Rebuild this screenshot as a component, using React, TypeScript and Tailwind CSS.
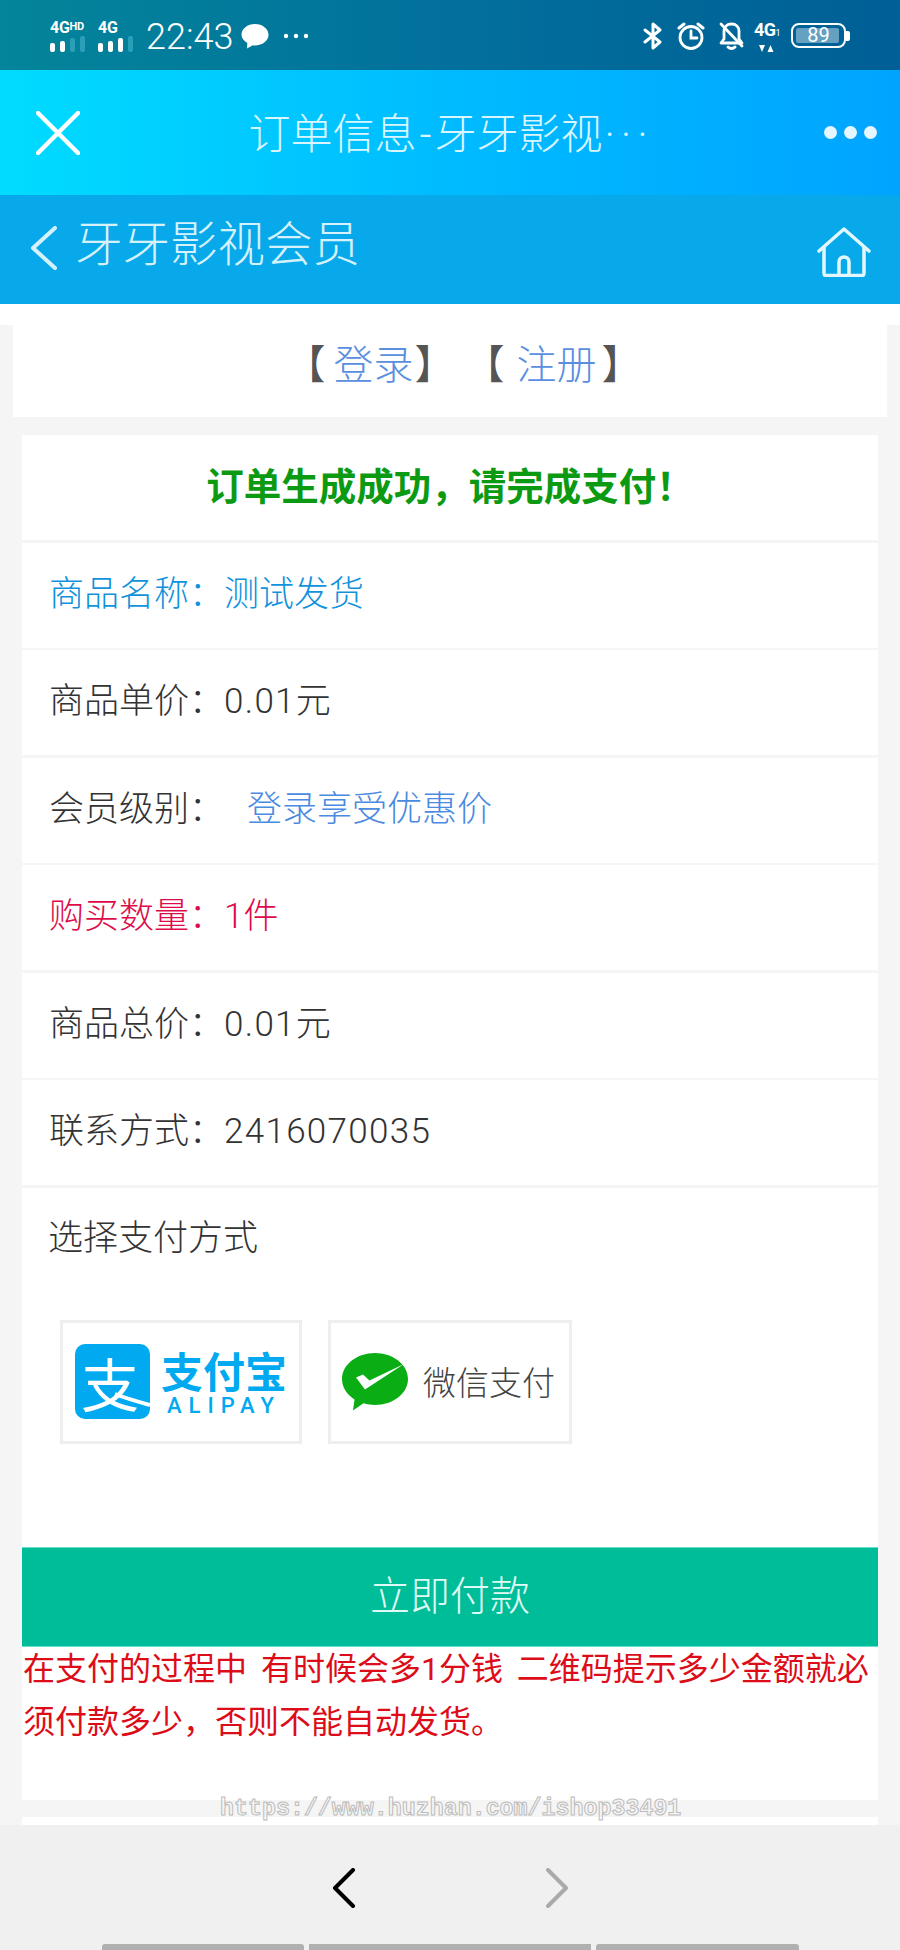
const CJK = "font-['Roboto','Noto_Sans_CJK_SC',sans-serif]";

const ROWS = [
  { label: "商品名称：", value: "测试发货", color: "text-[#1092dc]", spaced: false },
  { label: "商品单价：", value: "0.01元", color: "text-[#333333]", spaced: true },
  { label: "会员级别：", value: "", color: "text-[#333333]", link: "登录享受优惠价", spaced: false },
  { label: "购买数量：", value: "1件", color: "text-[#dc0c4a]", spaced: false },
  { label: "商品总价：", value: "0.01元", color: "text-[#333333]", spaced: true },
  { label: "联系方式：", value: "2416070035", color: "text-[#333333]", spaced: true },
];

const BAR_HEIGHTS = ["h-[9px]", "h-[11px]", "h-[14px]", "h-[16px]"];

function Signal({ label, sup, lit, width }: { label: string; sup?: string; lit: number; width: string }) {
  return (
    <div className={`flex flex-col ${width}`}>
      <span className="whitespace-nowrap font-['Roboto',sans-serif] text-[16px] font-bold leading-[15px] tracking-[-0.3px] text-white">
        {label}
        {sup && <span className="align-[3px] text-[11px]">{sup}</span>}
      </span>
      <div className="mt-[1px] flex h-[16px] items-end gap-[5px]">
        {BAR_HEIGHTS.map((h, i) => (
          <span key={h} className={`${h} w-[5px] rounded-[2px] ${i < lit ? "bg-white" : "bg-[#2aa0b8]"}`} />
        ))}
      </div>
    </div>
  );
}

function StatusBar() {
  return (
    <div className="flex h-[70px] items-center bg-gradient-to-r from-[#04859a] via-[#02709c] to-[#005f96] pl-[50px] pr-[50px] pt-[1px] text-white">
      <Signal label="4G" sup="HD" lit={2} width="w-[48px]" />
      <Signal label="4G" lit={3} width="w-[48px]" />
      <span className="w-[95px] pt-[2px] font-['Roboto',sans-serif] text-[36px] font-light leading-none">22:43</span>
      <svg width="28" height="26" viewBox="0 0 28 26" className="mr-[14px]">
        <path d="M14 1c7.5 0 13.5 4.8 13.5 10.8S21.500 22.500 14 22.500c-.8 0-1.500 0-2.200-.2L6 25.500l.3-5.500C2.800 18 .5 15.100.5 11.800.5 5.800 6.500 1 14 1z" fill="#fff" />
      </svg>
      <svg width="26" height="6" viewBox="0 0 26 6">
        <circle cx="3" cy="3" r="2.200" fill="#fff" />
        <circle cx="13" cy="3" r="2.200" fill="#fff" />
        <circle cx="23" cy="3" r="2.200" fill="#fff" />
      </svg>
      <div className="ml-auto flex items-center">
        <svg width="20" height="28" viewBox="0 0 20 28" fill="none" stroke="#fff" strokeWidth="3" strokeLinejoin="round" strokeLinecap="round">
          <path d="M2 8l15 12-7 6V2l7 6L2 20" />
        </svg>
        <svg width="28" height="28" viewBox="0 0 28 28" fill="none" stroke="#fff" strokeWidth="2.800" strokeLinecap="round" className="ml-[14px]">
          <circle cx="14" cy="15.500" r="11" />
          <path d="M14 9v7h6" />
          <path d="M2 6l5-4M26 6l-5-4" strokeWidth="3" />
        </svg>
        <svg width="27" height="28" viewBox="0 0 27 28" fill="none" stroke="#fff" strokeWidth="2.800" strokeLinecap="round" strokeLinejoin="round" className="ml-[13px]">
          <path d="M6 9c0-4 3-7 7.500-7S21 5 21 9v8l3 4H3l3-4z" />
          <path d="M10 25c2 2 5 2 7 0" strokeWidth="3" />
          <path d="M3 2l21 22" />
        </svg>
        <div className="ml-[9px] flex h-[27px] w-[23px] flex-col items-start">
          <span className="font-['Roboto',sans-serif] text-[18px] font-bold leading-[15px] tracking-[-0.5px]">
            4G<span className="text-[9px] font-normal">1</span>
          </span>
          <svg width="15" height="7" viewBox="0 0 15 7" className="ml-[5px] mt-[4px] shrink-0">
            <path d="M0 0h6L3 7zM8.500 7h6l-3-7z" fill="#fff" />
          </svg>
        </div>
        <div className="ml-[14px] flex items-center">
          <div className="relative flex h-[25px] w-[55px] items-center rounded-[8px] border-2 border-white p-[3px]">
            <div className="h-full w-[43px] rounded-[2px] bg-white/40" />
            <span className="absolute inset-0 text-center font-['Roboto',sans-serif] text-[20px] leading-[21px]">89</span>
          </div>
          <span className="h-[10px] w-[4px] rounded-r-[2px] bg-white" />
        </div>
      </div>
    </div>
  );
}

function TitleBar() {
  return (
    <div className="flex h-[125px] items-center bg-gradient-to-r from-[#00dcff] via-[#00bbff] to-[#00a4ff] pl-[36px] pr-[23px]">
      <svg width="44" height="44" viewBox="0 0 44 44" fill="none" stroke="#fff" strokeWidth="4.500" strokeLinecap="round">
        <path d="M2 2l40 40M42 2L2 42" />
      </svg>
      <div className={`flex-1 whitespace-nowrap pr-[2px] pt-[4px] text-center text-[42px] font-light leading-none text-[#d9f6ff] ${CJK}`}>
        订单信息<span className="mx-[3px]">-</span>牙牙影视<span className="ml-[2px] tracking-[6px]">···</span>
      </div>
      <div className="flex gap-[7px]">
        <span className="h-[13px] w-[13px] rounded-full bg-white/90" />
        <span className="h-[13px] w-[13px] rounded-full bg-white/90" />
        <span className="h-[13px] w-[13px] rounded-full bg-white/90" />
      </div>
    </div>
  );
}

function NavBar() {
  return (
    <div className="flex h-[109px] items-center bg-[#08a9ea] pl-[30px] pr-[29px]">
      <svg width="28" height="44" viewBox="0 0 28 44" fill="none" stroke="#d5f2fc" strokeWidth="4" strokeLinecap="round" strokeLinejoin="round" className="mb-[3px]">
        <path d="M25 2L3 22l22 20" />
      </svg>
      <span className={`mb-[7px] ml-[17px] text-[47.500px] font-light leading-none text-[#d5f2fc] ${CJK}`}>牙牙影视会员</span>
      <svg width="54" height="50" viewBox="0 0 54 50" fill="none" stroke="#e2f7fd" strokeWidth="3.500" strokeLinejoin="round" strokeLinecap="round" className="ml-auto mt-[5px]">
        <path d="M2 24L27 2l25 22" />
        <path d="M7 20v26c0 1.500.8 2.500 2 2.500h36c1.200 0 2-1 2-2.500V20" />
        <path d="M22 48V35c0-3 2.200-5 5-5s5 2 5 5v13" />
      </svg>
    </div>
  );
}

function Alipay() {
  return (
    <div className="flex h-[124px] w-[242px] items-center border-[3px] border-[#eeeeee] bg-white pl-[12px]">
      <div className="relative flex h-[75px] w-[75px] shrink-0 items-center justify-center rounded-[10px] bg-[#00a9f0]">
        <span className="mr-[5px] font-['Noto_Sans_CJK_SC',sans-serif] text-[58px] leading-[70px] text-white">支</span>
        {/* tail of the logo mark running out to the right edge */}
        <svg width="75" height="75" viewBox="0 0 75 75" className="absolute inset-0" fill="none" stroke="#fff" strokeWidth="4">
          <path d="M40 50c10 4 24 8 35 11" />
        </svg>
      </div>
      <div className="ml-[11px] flex flex-col items-start">
        <span className="font-['Noto_Sans_CJK_SC',sans-serif] text-[42px] font-bold leading-[44px] text-[#00a9f0]">支付宝</span>
        <span className="ml-[6px] mt-[4px] font-['Roboto',sans-serif] text-[22px] font-medium leading-[20px] tracking-[7px] text-[#00a9f0]">ALIPAY</span>
      </div>
    </div>
  );
}

function Wechat() {
  return (
    <div className="flex h-[124px] w-[244px] items-center border-[3px] border-[#eeeeee] bg-white pl-[11px]">
      <svg width="66" height="58" viewBox="0 0 66 58">
        <path d="M33 0c18 0 33 11.500 33 26S51 52 33 52c-4 0-8-.6-11.500-1.700L11 57.500l1.500-11C4.800 41.500 0 34.300 0 26 0 11.500 15 0 33 0z" fill="#0aae14" />
        <path d="M14 24.500l7-3 6.500 6L62 11 23 36.500z" fill="#fff" />
      </svg>
      <span className={`ml-[15px] whitespace-nowrap pt-[4px] text-[33px] font-light leading-none text-[#444444] ${CJK}`}>微信支付</span>
    </div>
  );
}

function OrderCard() {
  return (
    <div className="mx-[22px] mt-[18px] flex flex-col gap-[2.5px]">
      <div className={`flex h-[105px] items-center justify-center bg-white text-[37.500px] font-bold text-[#0b9a12] ${CJK}`}>
        订单生成成功，请完成支付！
      </div>
      {ROWS.map((row) => (
        <div key={row.label} className={`flex h-[105px] items-center whitespace-pre bg-white pl-[27px] text-[35px] font-light ${row.color} ${CJK}`}>
          {row.label}
          <span className={row.spaced ? "tracking-[1.300px]" : ""}>{row.value}</span>
          {row.link && <span className="ml-[23px] text-[#4a8ae0]">{row.link}</span>}
        </div>
      ))}
      <div className="bg-white">
        <div className={`flex h-[99px] items-center pt-[4px] pl-[26px] text-[35px] font-light text-[#333333] ${CJK}`}>选择支付方式</div>
        <div className="mt-[33px] flex gap-[26px] pl-[38px]">
          <Alipay />
          <Wechat />
        </div>
        <button type="button" className={`mt-[103px] block h-[100px] w-full border-y border-[#66e0cc] bg-[#00bd9a] pt-[1px] text-[40px] font-light text-[#e0fbf5] ${CJK}`}>
          立即付款
        </button>
        <p className={`relative -mt-[4px] h-[157px] pl-[1px] text-[32px] leading-[53px] text-[#dc0d18] [word-spacing:6px] ${CJK}`}>
          在支付的过程中 有时候会多1分钱 二维码提示多少金额就必须付款多少，否则不能自动发货。
        </p>
      </div>
      <div className="mt-[14.500px] h-[40px] bg-white" />
    </div>
  );
}

function BottomBar() {
  return (
    <div className="relative z-10 flex h-[125px] flex-col items-center bg-[#f0f0f0]">
      <div className="mt-[43px] flex gap-[189px]">
        <svg width="24" height="40" viewBox="0 0 24 40" fill="none" stroke="#000" strokeWidth="4" strokeLinecap="round" strokeLinejoin="round">
          <path d="M21 2L3 20l18 18" />
        </svg>
        <svg width="24" height="40" viewBox="0 0 24 40" fill="none" stroke="#aaaaaa" strokeWidth="4" strokeLinecap="round" strokeLinejoin="round">
          <path d="M3 2l18 18L3 38" />
        </svg>
      </div>
      <div className="mt-auto flex gap-[5px]">
        <span className="h-[6px] w-[202px] rounded-t-[3px] bg-[#b0b0b0]" />
        <span className="h-[6px] w-[282px] bg-[#b0b0b0]" />
        <span className="h-[6px] w-[203px] rounded-t-[3px] bg-[#b0b0b0]" />
      </div>
    </div>
  );
}

export default function App() {
  return (
    <div className="relative flex h-[1950px] w-[900px] flex-col overflow-hidden bg-[#f5f5f5]">
      <StatusBar />
      <TitleBar />
      <NavBar />
      <div className="min-h-0 flex-1 overflow-hidden">
        <div className="h-[21px] bg-white" />
        <div className={`mx-[13px] flex h-[92px] items-center justify-center whitespace-pre bg-white pb-[10px] pl-[27px] text-[40px] font-light text-[#555555] ${CJK}`}>
          <span className="font-normal tracking-[8px]">【</span>
          <span className="text-[#5a8fe0]">登录</span>
          <span className="ml-[1px] font-normal">】</span>
          <span className="ml-[10px] font-normal tracking-[12px]">【</span>
          <span className="text-[#5a8fe0]">注册</span>
          <span className="ml-[5px] font-normal">】</span>
        </div>
        <OrderCard />
      </div>
      <BottomBar />
      {/* watermark sits over the page */}
      <div className="absolute left-[220px] top-[1794px] z-20 font-['Liberation_Mono',monospace] text-[23.300px] font-bold leading-[30px] text-transparent [-webkit-text-stroke:1px_#bcbcbc]">
        https://www.huzhan.com/ishop33491
      </div>
    </div>
  );
}
